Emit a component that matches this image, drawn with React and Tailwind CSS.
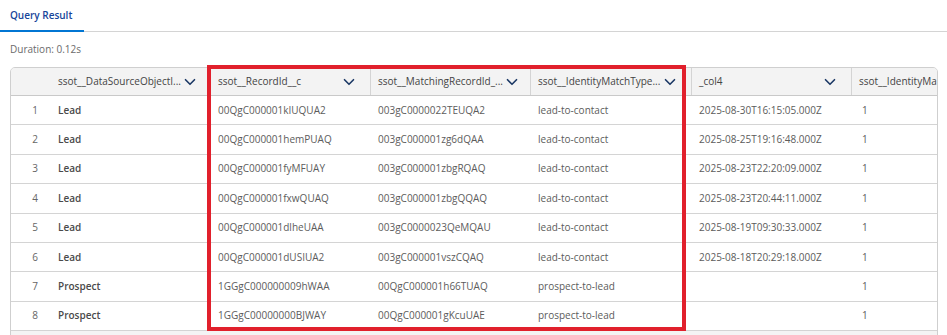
import React from 'react';
import { ChevronDown } from 'lucide-react';

const columns = [
  { key: 'source', label: 'ssot__DataSourceObjectI...', width: 'w-[160px]' },
  { key: 'record', label: 'ssot__RecordId__c', width: 'w-[160px]' },
  { key: 'matching', label: 'ssot__MatchingRecordId_...', width: 'w-[160px]' },
  { key: 'type', label: 'ssot__IdentityMatchType...', width: 'w-[161px]' },
  { key: 'col4', label: '_col4', width: 'w-[160px]' },
  { key: 'flag', label: 'ssot__IdentityMa', width: 'w-[160px]' },
];

const rows = [
  ['Lead', '00QgC000001kIUQUA2', '003gC0000022TEUQA2', 'lead-to-contact', '2025-08-30T16:15:05.000Z', '1'],
  ['Lead', '00QgC000001hemPUAQ', '003gC000001zg6dQAA', 'lead-to-contact', '2025-08-25T19:16:48.000Z', '1'],
  ['Lead', '00QgC000001fyMFUAY', '003gC000001zbgRQAQ', 'lead-to-contact', '2025-08-23T22:20:09.000Z', '1'],
  ['Lead', '00QgC000001fxwQUAQ', '003gC000001zbgQQAQ', 'lead-to-contact', '2025-08-23T20:44:11.000Z', '1'],
  ['Lead', '00QgC000001dlheUAA', '003gC0000023QeMQAU', 'lead-to-contact', '2025-08-19T09:30:33.000Z', '1'],
  ['Lead', '00QgC000001dUSIUA2', '003gC000001vszCQAQ', 'lead-to-contact', '2025-08-18T20:29:18.000Z', '1'],
  ['Prospect', '1GGgC000000009hWAA', '00QgC000001h66TUAQ', 'prospect-to-lead', '', '1'],
  ['Prospect', '1GGgC00000000BJWAY', '00QgC000001gKcuUAE', 'prospect-to-lead', '', '1'],
];

const App = () => {
  return (
    <div className="relative w-[947px] h-[335px] overflow-hidden bg-white font-['Open_Sans',sans-serif]">
      {/* Tabs */}
      <div className="flex h-[32px] border-b border-[#d4d4d4]">
        <div className="w-[84px] h-[32px] -mb-px pl-[10px] flex items-center border-b-2 border-[#0176d3] text-[10px] font-semibold text-[#16459a]">
          Query Result
        </div>
      </div>

      <div className="h-[35px] pl-[10px] flex items-center text-[10px] text-[#6b6b6b]">
        Duration: 0.12s
      </div>

      {/* Result table */}
      <div className="ml-[10px] w-[928px] h-[270px] border border-[#cfcfcf] rounded-t-[5px] overflow-hidden bg-[#f4f4f4]">
        <div className="flex h-[28px] bg-[#f3f3f3] border-b border-[#c9c9c9] text-[10px] text-[#444]">
          <div className="w-[40px] shrink-0" />
          {columns.map((col, i) => (
            <div
              key={col.key}
              className={`${col.width} shrink-0 flex items-center justify-between pl-[7px] pr-[12px] whitespace-nowrap overflow-hidden ${i < 5 ? 'border-r border-[#d4d4d4]' : ''}`}
            >
              <span>{col.label}</span>
              {i < 5 && <ChevronDown size={18} strokeWidth={2.2} className="text-[#1d3a66] shrink-0" />}
            </div>
          ))}
        </div>

        {rows.map((row, r) => (
          <div key={r} className="flex h-[29.375px] bg-white border-b border-[#d4d4d4] text-[10px] text-[#5c5c5c]">
            <div className="w-[40px] shrink-0 flex items-center justify-end pr-[13px] text-[#666]">{r + 1}</div>
            {row.map((cell, c) => (
              <div
                key={c}
                className={`${columns[c].width} shrink-0 flex items-center pl-[7px] whitespace-nowrap overflow-hidden ${c === 0 ? 'font-semibold text-[#4a4a4a]' : ''} ${c === 5 ? 'pl-[10px]' : ''}`}
              >
                {cell}
              </div>
            ))}
          </div>
        ))}
      </div>

      {/* Highlight overlay */}
      <div className="absolute left-[207px] top-[65px] w-[479px] h-[266px] border-4 border-[#e1202c] pointer-events-none" />
    </div>
  );
};

export default App;
